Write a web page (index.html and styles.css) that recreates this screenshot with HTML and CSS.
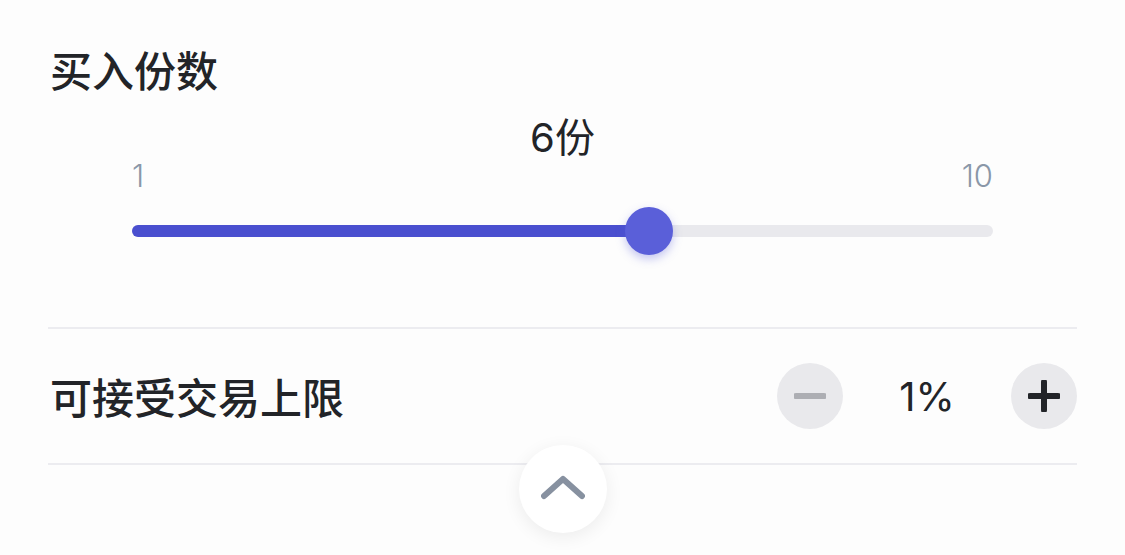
FILE: index.html
```html
<!DOCTYPE html>
<html lang="zh-CN">
<head>
<meta charset="utf-8">
<link rel="stylesheet" href="styles.css">
</head>
<body>
<div class="panel">
  <section class="qty">
    <h2 class="title">买入份数</h2>
    <div class="slider">
      <div class="value">6份</div>
      <div class="ends"><span>1</span><span>10</span></div>
      <div class="track">
        <div class="fill" style="width:60%"><span class="thumb"></span></div>
      </div>
    </div>
  </section>
  <div class="divider"></div>
  <section class="row">
    <h2 class="title">可接受交易上限</h2>
    <div class="stepper">
      <button class="step step-minus" aria-label="减少">
        <svg width="32" height="32" viewBox="0 0 32 32"><line x1="2" y1="16" x2="30" y2="16" stroke="#adaeb3" stroke-width="6" stroke-linecap="round"/></svg>
      </button>
      <span class="step-value">1%</span>
      <button class="step step-plus" aria-label="增加">
        <svg width="32" height="32" viewBox="0 0 32 32"><line x1="2" y1="16" x2="30" y2="16" stroke="#222428" stroke-width="6" stroke-linecap="round"/><line x1="16" y1="2" x2="16" y2="30" stroke="#222428" stroke-width="6" stroke-linecap="round"/></svg>
      </button>
    </div>
  </section>
  <div class="divider"></div>
  <div class="collapse-wrap">
    <button class="collapse" aria-label="收起">
      <svg width="44" height="26" viewBox="0 0 44 26"><polyline points="3,22 22,5 41,22" fill="none" stroke="#8791a0" stroke-width="6" stroke-linecap="round" stroke-linejoin="round"/></svg>
    </button>
  </div>
</div>
</body>
</html>
```

FILE: styles.css
```css
* { box-sizing: border-box; }
html, body {
  margin: 0;
  padding: 0;
  background: #fdfdfd;
}
body {
  font-family: "Inter", "Noto Sans CJK SC", sans-serif;
  color: #222428;
  overflow: hidden;
}
.panel {
  width: 1125px;
  height: 555px;
  padding: 0 48px;
}
.title {
  margin: 0;
  font-family: "Noto Sans CJK SC", sans-serif;
  font-size: 42px;
  font-weight: 500;
  line-height: 50px;
  padding-left: 2px;
}
.qty {
  padding-top: 44px;
  padding-bottom: 90px;
}
.slider {
  padding: 0 84px;
  margin-top: 24px;
}
.value {
  text-align: center;
  font-size: 40px;
  line-height: 40px;
  font-weight: 400;
}
.ends {
  display: flex;
  justify-content: space-between;
  margin-top: 3px;
  font-size: 31px;
  line-height: 30px;
  color: #8a97a8;
  font-weight: 300;
}
.track {
  margin-top: 34px;
  height: 12px;
  border-radius: 6px;
  background: #e9e9ed;
}
.fill {
  height: 12px;
  border-radius: 6px;
  background: #4a4fcf;
  position: relative;
}
.thumb {
  position: absolute;
  right: -24px;
  top: -18px;
  width: 48px;
  height: 48px;
  border-radius: 50%;
  background: #5a5fd9;
  box-shadow: 0 4px 10px rgba(90, 95, 217, 0.35);
}
.divider {
  height: 2px;
  background: #ececf0;
}
.row {
  height: 134px;
  display: flex;
  align-items: center;
  justify-content: space-between;
}
.stepper {
  display: flex;
  align-items: center;
}
.step {
  width: 66px;
  height: 66px;
  border-radius: 50%;
  border: 0;
  padding: 0;
  background: #e9e9ec;
  display: flex;
  align-items: center;
  justify-content: center;
}
.step-value {
  width: 168px;
  text-align: center;
  font-size: 40px;
  font-weight: 400;
}
.collapse-wrap {
  display: flex;
  justify-content: center;
  margin-top: -20px;
  position: relative;
}
.collapse {
  width: 88px;
  height: 88px;
  border-radius: 50%;
  border: 0;
  padding: 0;
  background: #ffffff;
  box-shadow: 0 4px 18px rgba(0, 0, 0, 0.07);
  display: flex;
  align-items: center;
  justify-content: center;
}
.collapse svg { margin-top: -4px; }
```
